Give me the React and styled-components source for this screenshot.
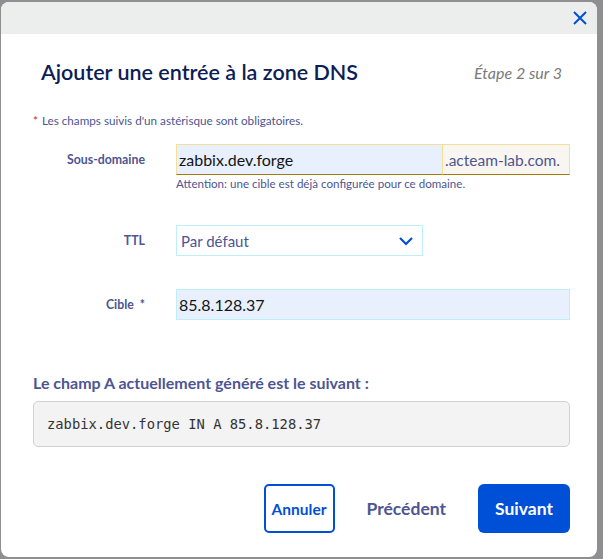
import React from "react";
import styled, { createGlobalStyle } from "styled-components";

const GlobalStyle = createGlobalStyle`
  html, body {
    margin: 0;
    padding: 0;
    background: #8f8f91;
    font-family: Lato, "Noto Sans", sans-serif;
  }
  * {
    box-sizing: border-box;
  }
`;

const Backdrop = styled.div`
  width: 603px;
  height: 559px;
  padding: 2px 6px 2px 1px;
`;

const Modal = styled.div`
  width: 596px;
  height: 555px;
  background: #fff;
  border-radius: 8px;
  overflow: hidden;
  display: flex;
  flex-direction: column;
`;

const Header = styled.div`
  height: 32px;
  background: #eceeed;
  display: flex;
  justify-content: flex-end;
  align-items: center;
  padding-right: 9px;
`;

const CloseButton = styled.button`
  border: 0;
  background: transparent;
  padding: 0;
  width: 16px;
  height: 16px;
  display: flex;
  align-items: center;
  justify-content: center;
  cursor: pointer;
  svg {
    width: 14px;
    height: 14px;
  }
`;

const Body = styled.div`
  padding: 26px 27px 24px 32px;
  display: flex;
  flex-direction: column;
  flex: 1;
`;

const TitleRow = styled.div`
  display: flex;
  justify-content: space-between;
  align-items: center;
  padding: 0 8px 0 8px;
  height: 24px;
`;

const Title = styled.h2`
  margin: 0;
  font-size: 21.5px;
  font-weight: 600;
  color: #0d1d55;
`;

const Step = styled.span`
  font-size: 16px;
  font-style: italic;
  color: #7a7a7a;
`;

const Note = styled.p`
  margin: 29px 0 0;
  font-size: 11.7px;
  line-height: 14px;
  color: #4d5592;
  span {
    color: #e01c1c;
    margin-right: 4px;
  }
`;

const FormRow = styled.div`
  display: grid;
  grid-template-columns: 112px 1fr;
  column-gap: 31px;
  align-items: center;
  margin-top: ${(p) => p.$top}px;
`;

const Label = styled.label`
  text-align: right;
  font-size: 12.3px;
  font-weight: 700;
  color: #4d5592;
`;

const Field = styled.div`
  grid-column: 2;
  width: ${(p) => p.$width || "100%"};
`;

const InputGroup = styled.div`
  display: flex;
  height: 31px;
`;

const TextInput = styled.div`
  flex: 1;
  height: 31px;
  display: flex;
  align-items: center;
  padding: 0 8px 0 2px;
  font-size: 16px;
  color: #141414;
  background: #e8f0fe;
  border: 1px solid ${(p) => (p.$warn ? "#f6df96" : "#bdeffa")};
  border-bottom-color: ${(p) => (p.$warn ? "#a47a10" : "#bdeffa")};
  border-right: ${(p) => (p.$warn ? "0" : "1px solid #bdeffa")};
`;

const Addon = styled.div`
  width: 128px;
  height: 31px;
  display: flex;
  align-items: center;
  padding-left: 2px;
  font-size: 15.5px;
  color: #4d5592;
  background: #f9f5f0;
  border: 1px solid #f6df96;
  border-bottom-color: #a47a10;
`;

const Hint = styled.div`
  grid-column: 2;
  margin-top: 2px;
  font-size: 11.6px;
  line-height: 14px;
  color: #4d5592;
`;

const Select = styled.div`
  height: 31px;
  display: flex;
  align-items: center;
  justify-content: space-between;
  padding: 0 8px 0 4px;
  font-size: 15px;
  color: #4d5592;
  background: #fff;
  border: 1px solid #bdeffa;
  svg {
    width: 16px;
    height: 16px;
  }
`;

const SectionTitle = styled.h3`
  margin: 54px 0 0;
  font-size: 16px;
  line-height: 18px;
  font-weight: 700;
  color: #4d5592;
`;

const Preview = styled.div`
  margin-top: 9px;
  height: 46px;
  display: flex;
  align-items: center;
  padding: 0 13px;
  background: #f3f3f3;
  border: 1px solid #d2d2d2;
  border-radius: 5px;
  font-family: "DejaVu Sans Mono", "Liberation Mono", monospace;
  font-size: 13.8px;
  color: #333;
`;

const Actions = styled.div`
  margin-top: 37px;
  display: flex;
  justify-content: flex-end;
  align-items: center;
  gap: 16px;
`;

const Button = styled.button`
  height: 49px;
  border-radius: ${(p) => (p.$variant === "primary" ? "6px" : "5px")};
  font-family: inherit;
  font-weight: 700;
  cursor: pointer;
  ${(p) =>
    p.$variant === "primary" &&
    `
    width: 92px;
    background: #0050d7;
    color: #fff;
    border: 0;
    font-size: 17.5px;
  `}
  ${(p) =>
    p.$variant === "outline" &&
    `
    width: 71px;
    background: #fff;
    color: #0050d7;
    border: 2px solid #0050d7;
    font-size: 15.5px;
    padding: 0;
  `}
  ${(p) =>
    p.$variant === "ghost" &&
    `
    background: transparent;
    color: #4d5592;
    border: 0;
    font-size: 17.5px;
    padding: 0 16px;
  `}
`;

const CloseIcon = () => (
  <svg viewBox="0 0 14 14" fill="none" stroke="#0050d7" strokeWidth="2">
    <path d="M1 1L13 13M13 1L1 13" />
  </svg>
);

const Chevron = () => (
  <svg viewBox="0 0 16 16" fill="none" stroke="#0050d7" strokeWidth="2.2">
    <path d="M2 5l6 6 6-6" />
  </svg>
);

export default function App() {
  return (
    <>
      <GlobalStyle />
      <Backdrop>
        <Modal>
          <Header>
            <CloseButton aria-label="Fermer">
              <CloseIcon />
            </CloseButton>
          </Header>
          <Body>
            <TitleRow>
              <Title>Ajouter une entrée à la zone DNS</Title>
              <Step>Étape 2 sur 3</Step>
            </TitleRow>
            <Note>
              <span>*</span>Les champs suivis d'un astérisque sont obligatoires.
            </Note>

            <FormRow $top={17}>
              <Label>Sous-domaine</Label>
              <Field>
                <InputGroup>
                  <TextInput $warn>zabbix.dev.forge</TextInput>
                  <Addon>.acteam-lab.com.</Addon>
                </InputGroup>
              </Field>
              <Hint>Attention: une cible est déjà configurée pour ce domaine.</Hint>
            </FormRow>

            <FormRow $top={34}>
              <Label>TTL</Label>
              <Field $width="247px">
                <Select>
                  Par défaut
                  <Chevron />
                </Select>
              </Field>
            </FormRow>

            <FormRow $top={33}>
              <Label>Cible &nbsp;*</Label>
              <Field>
                <TextInput>85.8.128.37</TextInput>
              </Field>
            </FormRow>

            <SectionTitle>Le champ A actuellement généré est le suivant :</SectionTitle>
            <Preview>zabbix.dev.forge IN A 85.8.128.37</Preview>

            <Actions>
              <Button $variant="outline">Annuler</Button>
              <Button $variant="ghost">Précédent</Button>
              <Button $variant="primary">Suivant</Button>
            </Actions>
          </Body>
        </Modal>
      </Backdrop>
    </>
  );
}
